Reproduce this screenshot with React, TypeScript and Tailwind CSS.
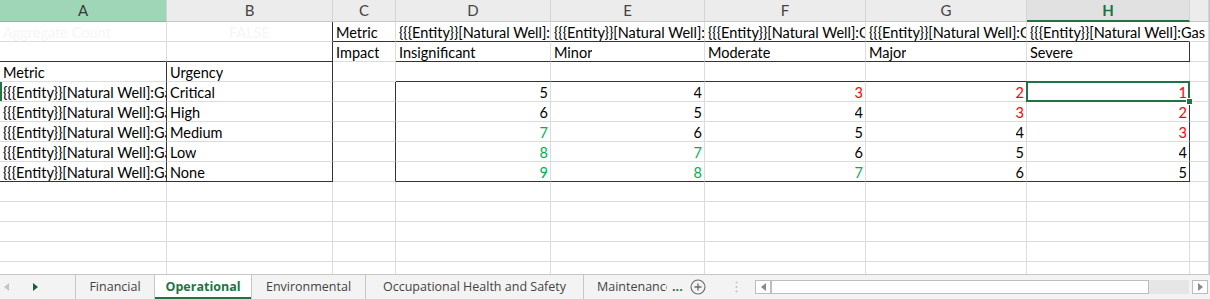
import React from 'react';

type C = {
  t?: string;
  a?: 'l' | 'r' | 'c';
  col?: 'k' | 'r' | 'g' | 'f';
  rd?: boolean;
  bd?: boolean;
  ov?: boolean;
  sel?: boolean;
  mark?: boolean;
};

const ENT = '{{{Entity}}[Natural Well]:Gas Production';
const RED = 'r' as const;
const GRN = 'g' as const;

function buildRows(): C[][] {
  const rows: C[][] = [];
  for (let r = 0; r < 13; r++) {
    const row: C[] = [];
    for (let c = 0; c < 9; c++) row.push({});
    rows.push(row);
  }
  rows[0][0] = { t: 'Aggregate Count', col: 'f' };
  rows[0][1] = { t: 'FALSE', col: 'f', a: 'c', rd: true };
  rows[0][2] = { t: 'Metric', bd: true };
  for (let c = 3; c < 8; c++) rows[0][c] = { t: ENT, bd: true };
  rows[0][7] = { t: '{{{Entity}}[Natural Well]:Gas', bd: true, ov: true };
  rows[1][0] = { bd: true };
  rows[1][1] = { bd: true, rd: true };
  rows[1][2] = { t: 'Impact' };
  const imp = ['Insignificant', 'Minor', 'Moderate', 'Major', 'Severe'];
  imp.forEach((t, i) => (rows[1][3 + i] = { t, bd: true }));
  rows[1][7].rd = true;
  rows[2][0] = { t: 'Metric', rd: true };
  rows[2][1] = { t: 'Urgency', rd: true };
  for (let c = 3; c < 8; c++) rows[2][c] = { bd: true };
  const urg = ['Critical', 'High', 'Medium', 'Low', 'None'];
  const nums: [string, 'k' | 'r' | 'g'][][] = [
    [['5', 'k'], ['4', 'k'], ['3', RED], ['2', RED], ['1', RED]],
    [['6', 'k'], ['5', 'k'], ['4', 'k'], ['3', RED], ['2', RED]],
    [['7', GRN], ['6', 'k'], ['5', 'k'], ['4', 'k'], ['3', RED]],
    [['8', GRN], ['7', GRN], ['6', 'k'], ['5', 'k'], ['4', 'k']],
    [['9', GRN], ['8', GRN], ['7', GRN], ['6', 'k'], ['5', 'k']],
  ];
  for (let i = 0; i < 5; i++) {
    const r = 3 + i;
    const last = i === 4;
    rows[r][0] = { t: ENT, rd: true, bd: last, mark: i === 0 };
    rows[r][1] = { t: urg[i], rd: true, bd: last };
    rows[r][2] = { rd: true };
    for (let j = 0; j < 5; j++) {
      rows[r][3 + j] = {
        t: nums[i][j][0],
        col: nums[i][j][1],
        a: 'r',
        bd: last,
        rd: j === 4,
        sel: i === 0 && j === 4,
      };
    }
  }
  return rows;
}

const rows = buildRows();
const headers = ['A', 'B', 'C', 'D', 'E', 'F', 'G', 'H', ''];

function colorCls(c?: C['col']) {
  if (c === 'r') return 'text-[#ff0000]';
  if (c === 'g') return 'text-[#00b050]';
  if (c === 'f') return 'text-[#f6f6f6]';
  return 'text-black';
}

function alignCls(a?: C['a']) {
  if (a === 'r') return 'justify-end pr-[2px]';
  if (a === 'c') return 'justify-center';
  return 'justify-start pl-[3px]';
}

function Cell({ c }: { c: C }) {
  return (
    <div
      className={[
        'relative flex h-[20px] min-w-0 items-end border-r border-b whitespace-nowrap',
        c.ov ? 'z-10 overflow-visible border-r-transparent' : 'overflow-hidden',
        !c.ov && (c.rd ? 'border-r-[#333333]' : 'border-r-[#dcdcdc]'),
        c.bd ? 'border-b-[#333333]' : 'border-b-[#dcdcdc]',
        alignCls(c.a),
        colorCls(c.col),
        c.mark ? 'shadow-[inset_2px_0_0_#217346]' : '',
      ]
        .filter(Boolean)
        .join(' ')}
    >
      <span className={c.ov ? 'leading-[16px]' : 'block min-w-0 overflow-hidden leading-[16px]'}>{c.t ?? ''}</span>
    </div>
  );
}

function SelCell({ c }: { c: C }) {
  return (
    <div className="relative z-20 flex h-[20px] items-end justify-end border-r border-b border-r-[#333333] border-b-[#dcdcdc] pr-[2px] text-[#ff0000]">
      <span className="leading-[16px]">{c.t}</span>
      <div className="pointer-events-none absolute top-[-1px] left-[-1px] right-[-1px] bottom-[-1px] border-2 border-[#217346]" />
      <div className="absolute right-[-4px] bottom-[-4px] h-[7px] w-[7px] border border-white bg-[#217346]" />
    </div>
  );
}

function HeaderRow() {
  return (
    <>
      {headers.map((h, i) => {
        let cls = 'bg-[#ececec] text-[#444444] border-b-[#c8c8c8]';
        if (i === 0) cls = 'bg-[#a0d6b8] text-[#3a3a3a] border-b-[#83bf9c]';
        if (i === 7) cls = 'bg-[#e1e1e1] text-[#217346] font-bold border-b-[#217346] border-b-2';
        return (
          <div
            key={i}
            className={`flex h-[22px] items-center justify-center border-r border-b border-r-[#d4d4d4] text-[15px] ${cls}`}
          >
            {h}
          </div>
        );
      })}
    </>
  );
}

function TriLeft({ color }: { color: string }) {
  return (
    <svg width="5" height="8" viewBox="0 0 5 8">
      <path d="M5 0 L0 4 L5 8 Z" fill={color} />
    </svg>
  );
}
function TriRight({ color }: { color: string }) {
  return (
    <svg width="5" height="8" viewBox="0 0 5 8">
      <path d="M0 0 L5 4 L0 8 Z" fill={color} />
    </svg>
  );
}

function TabBar() {
  return (
    <div
      className="flex h-[25px] items-stretch border-t border-[#c6c6c6] bg-[#f3f3f3] text-[12.5px] text-[#444444]"
      style={{ fontFamily: '"Open Sans", "Noto Sans", sans-serif' }}
    >
      <div className="flex w-[76px] items-center border-r border-[#c6c6c6]">
        <span className="ml-[4px] flex">
          <TriLeft color="#c4c4c4" />
        </span>
        <span className="ml-[24px] flex">
          <TriRight color="#1d5c3a" />
        </span>
      </div>
      <div className="flex w-[79px] items-center justify-center border-r border-[#c6c6c6]">Financial</div>
      <div className="relative flex w-[97px] items-center justify-center border-r border-[#c6c6c6] bg-white font-bold text-[#217346]">
        Operational
        <div className="absolute right-0 bottom-0 left-0 h-[2px] bg-[#217346]" />
      </div>
      <div className="flex w-[114px] items-center justify-center border-r border-[#c6c6c6]">Environmental</div>
      <div className="flex w-[218px] items-center justify-center border-r border-[#c6c6c6]">
        Occupational Health and Safety
      </div>
      <div className="flex w-[106px] items-center pl-[13px]">
        <span className="w-[70px] overflow-hidden whitespace-nowrap">Maintenance</span>
        <span className="ml-[5px] font-bold text-[#217346]">...</span>
      </div>
      <div className="flex w-[28px] items-center justify-start">
        <svg width="16" height="16" viewBox="0 0 16 16">
          <circle cx="8" cy="8" r="7" fill="none" stroke="#6a6a6a" strokeWidth="1.1" />
          <path d="M8 4.5 V11.5 M4.5 8 H11.5" stroke="#6a6a6a" strokeWidth="1.3" />
        </svg>
      </div>
      <div className="flex w-[37px] items-center justify-center">
        <svg width="3" height="12" viewBox="0 0 3 12">
          <circle cx="1.5" cy="1.5" r="1" fill="#c0c0c0" />
          <circle cx="1.5" cy="6" r="1" fill="#c0c0c0" />
          <circle cx="1.5" cy="10.5" r="1" fill="#c0c0c0" />
        </svg>
      </div>
      <div className="flex flex-1 items-center pr-[2px]">
        <div className="flex h-[14px] w-[16px] items-center justify-center border border-[#bdbdbd] bg-white">
          <TriLeft color="#8a8a8a" />
        </div>
        <div className="h-[14px] w-[378px] border border-[#bdbdbd] bg-white" />
        <div className="h-[14px] flex-1 bg-[#e6e6e6]" />
        <div className="ml-[3px] flex h-[14px] w-[16px] items-center justify-center border border-[#bdbdbd] bg-white">
          <TriRight color="#8a8a8a" />
        </div>
      </div>
    </div>
  );
}

export default function App() {
  return (
    <div className="h-[299px] w-[1210px] overflow-hidden bg-white">
      <div
        className="grid h-[274px] grid-cols-[167px_166px_63px_155px_154px_161px_161px_163px_1fr] overflow-hidden border-r border-[#c6c6c6] text-[14.5px]"
        style={{ fontFamily: 'Lato, "Open Sans", sans-serif' }}
      >
        <HeaderRow />
        {rows.map((row, ri) =>
          row.map((c, ci) => (c.sel ? <SelCell key={`${ri}-${ci}`} c={c} /> : <Cell key={`${ri}-${ci}`} c={c} />))
        )}
      </div>
      <TabBar />
    </div>
  );
}
